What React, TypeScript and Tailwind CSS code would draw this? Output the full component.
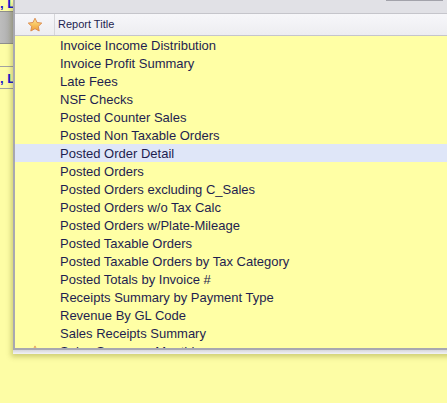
import React from "react";

// Favourite-reports dropdown lying over a yellow grid: only the grid's last 13px
// column shows at the left, the popup runs past the right edge of the window.

const reports = [
  "Invoice Income Distribution",
  "Invoice Profit Summary",
  "Late Fees",
  "NSF Checks",
  "Posted Counter Sales",
  "Posted Non Taxable Orders",
  "Posted Order Detail",
  "Posted Orders",
  "Posted Orders excluding C_Sales",
  "Posted Orders w/o Tax Calc",
  "Posted Orders w/Plate-Mileage",
  "Posted Taxable Orders",
  "Posted Taxable Orders by Tax Category",
  "Posted Totals by Invoice #",
  "Receipts Summary by Payment Type",
  "Revenue By GL Code",
  "Sales Receipts Summary",
  "Sales Summary Monthly",
];

const SELECTED = "Posted Order Detail";
const FAVOURITES = ["Sales Summary Monthly"];

function Star({ size, id }: { size: number; id: string }) {
  return (
    <svg width={size} height={size} viewBox="0 0 16 16">
      <defs>
        <linearGradient id={id} x1="0" y1="0" x2="0" y2="1">
          <stop offset="0" stopColor="#fde9a0" />
          <stop offset="0.5" stopColor="#f8c460" />
          <stop offset="1" stopColor="#ee9a3a" />
        </linearGradient>
      </defs>
      <path
        d="M8 1.2l2.05 4.3 4.7.6-3.45 3.25.9 4.65L8 11.7l-4.2 2.3.9-4.65L1.25 6.1l4.7-.6z"
        fill={`url(#${id})`}
        stroke="#d9884a"
        strokeWidth="0.9"
        strokeLinejoin="round"
      />
    </svg>
  );
}

function GridEdge() {
  return (
    <div className="flex w-[13px] flex-col overflow-hidden font-['Liberation_Sans',Arial,sans-serif] text-[13px] font-bold leading-none text-[#1414d2]">
      <div className="flex h-[11px] items-end whitespace-nowrap pb-[1px]">, L</div>
      <div className="h-[1px] bg-[#8e8e8e]" />
      <div className="h-[31px] bg-gradient-to-r from-[#bdbdbd] to-[#acacac]" />
      <div className="h-[1px] bg-[#8e8e8e]" />
      <div className="h-[22px]" />
      <div className="h-[1px] bg-[#a2a2a2]" />
      <div className="flex h-[21px] items-center whitespace-nowrap pt-[1px]">, L</div>
      <div className="h-[1px] bg-[#a2a2a2]" />
    </div>
  );
}

export default function App() {
  return (
    <div className="relative h-[403px] w-[447px] overflow-hidden bg-[#fdfda5]">
      <GridEdge />

      <div className="absolute left-[13px] top-0 flex w-[460px] flex-col shadow-[-2px_3px_5px_rgba(90,90,0,0.28)]">
        <div className="flex h-[350px] flex-col border-b-2 border-l-2 border-[#a8a8b0] bg-[#ffffa5]">
          {/* toolbar strip */}
          <div className="relative h-[13px] shrink-0 bg-[#e1e1e6]">
            <div className="absolute left-[371px] top-0 h-[1px] w-[57px] bg-[#a3a3ab]" />
          </div>

          {/* column header */}
          <div className="flex h-[23px] shrink-0 border-y border-[#c5c5cb] bg-gradient-to-b from-[#f7f7fa] to-[#ededf1] font-['Liberation_Sans',Arial,sans-serif] text-[11px] text-[#1e1e50]">
            <div className="flex w-[40px] items-center justify-center border-r border-[#d6d6da]">
              <Star size={16} id="hdr-star" />
            </div>
            <div className="flex items-center pl-[3px]">Report Title</div>
          </div>

          {/* report list */}
          <div className="flex-1 overflow-hidden font-['Liberation_Sans',Arial,sans-serif] text-[13px] text-[#1e1e50]">
            {reports.map((r) => (
              <div
                key={r}
                className={`flex h-[18px] items-center ${r === SELECTED ? "bg-[#dfe6f8]" : ""}`}
              >
                <div className="flex w-[40px] shrink-0 items-center justify-center">
                  {FAVOURITES.includes(r) && <Star size={12} id={`fav-${r.length}`} />}
                </div>
                <span className="whitespace-nowrap pl-[5px] pt-[1px]">{r}</span>
              </div>
            ))}
          </div>
        </div>
        <div className="h-[4px] bg-gradient-to-b from-[#d6d6dc] to-[#f3f3f5]" />
      </div>
    </div>
  );
}
